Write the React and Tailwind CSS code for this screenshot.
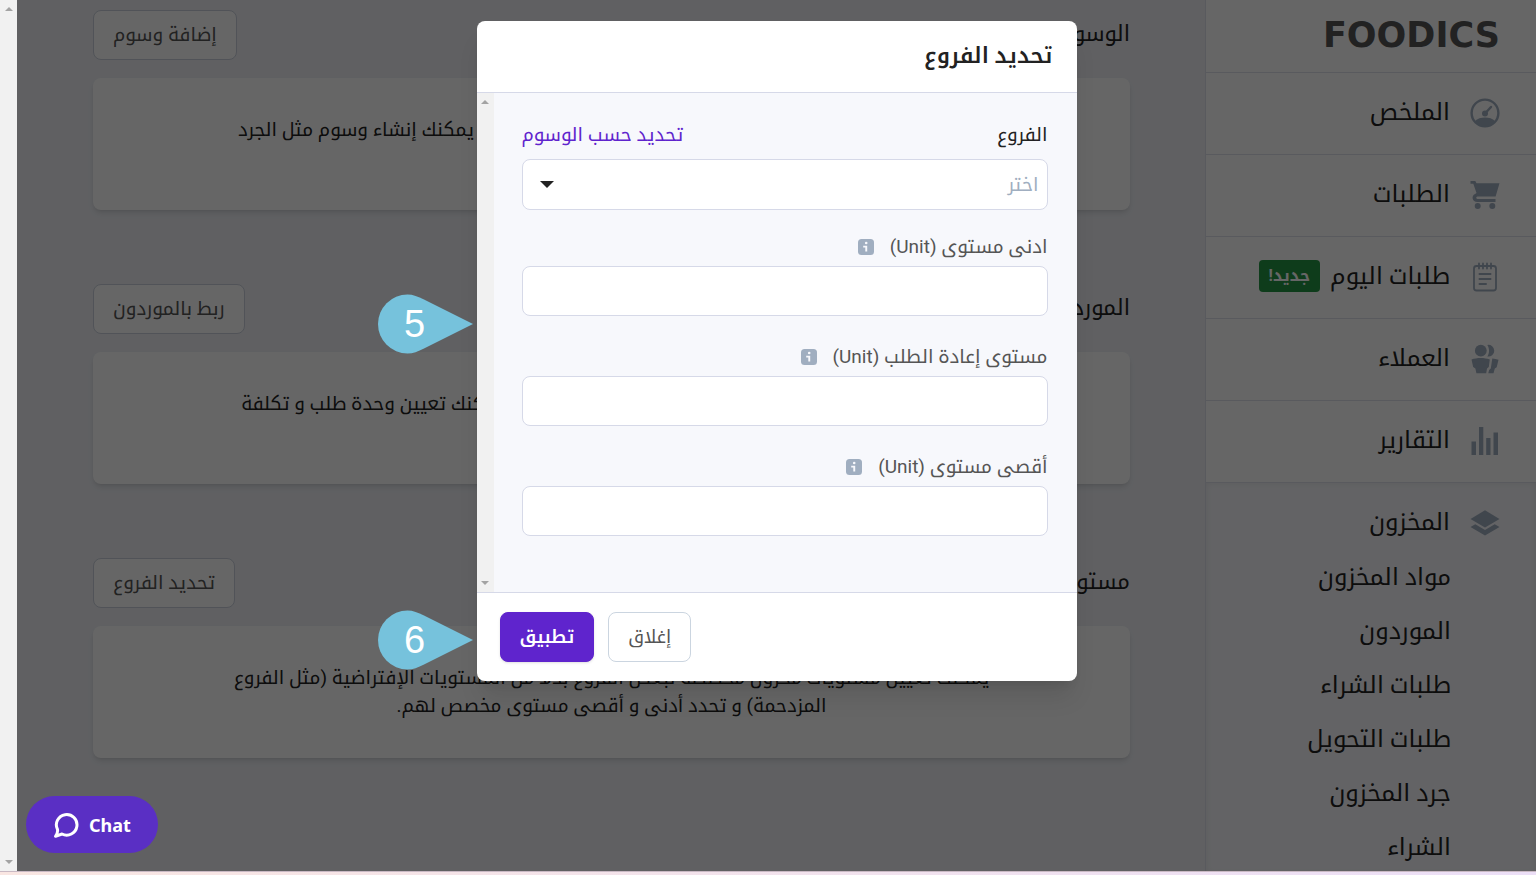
import React from "react";

const topLinks = [
  { label: "الملخص", icon: GaugeIcon },
  { label: "الطلبات", icon: CartIcon },
  { label: "طلبات اليوم", icon: NotepadIcon, badge: "جديد!" },
  { label: "العملاء", icon: PeopleIcon },
  { label: "التقارير", icon: BarsIcon },
];

const inventoryLinks = [
  "مواد المخزون",
  "الموردون",
  "طلبات الشراء",
  "طلبات التحويل",
  "جرد المخزون",
  "الشراء",
];

const sections = [
  {
    title: "الوسوم",
    action: "إضافة وسوم",
    lines: [
      "استخدم الوسوم لتصنيف وتنظيم مواد المخزون المتوفرة لديكم. يمكنك إنشاء وسوم مثل الجرد",
      "اليومي أو المواد الجافة.",
    ],
  },
  {
    title: "الموردون",
    action: "ربط بالموردون",
    lines: [
      "قم بربط هذه المادة بالموردين الذين تتعامل معهم باستمرار يمكنك تعيين وحدة طلب و تكلفة",
      "مختلفة لكل مورد.",
    ],
  },
  {
    title: "مستويات المخزون",
    action: "تحديد الفروع",
    lines: [
      "يمكنك تعيين مستويات مخزون مخصصة لبعض الفروع بدلاً من المستويات الإفتراضية (مثل الفروع",
      "المزدحمة) و تحدد أدنى و أقصى مستوى مخصص لهم.",
    ],
  },
];

const levelFields = [
  { id: "min-level", label: "ادنى مستوى (Unit)" },
  { id: "reorder-level", label: "مستوى إعادة الطلب (Unit)" },
  { id: "max-level", label: "أقصى مستوى (Unit)" },
];

function GaugeIcon() {
  return (
    <svg viewBox="0 0 30 30" className="size-[30px]" aria-hidden="true">
      <circle cx="15" cy="15" r="13.4" fill="none" stroke="currentColor" strokeWidth="2.4" />
      <path d="M5 23c2.500-2.500 6-3.500 10-3.500s7.500 1 10 3.500c-2.500 4-6 6-10 6s-7.500-2-10-6Z" fill="currentColor" />
      <circle cx="15" cy="15.500" r="3" fill="currentColor" />
      <path d="m15 15.500 6-6.500" stroke="currentColor" strokeWidth="2.400" strokeLinecap="round" />
    </svg>
  );
}

function CartIcon() {
  return (
    <svg viewBox="0 0 30 30" className="size-[30px]" fill="currentColor" aria-hidden="true">
      <path d="M.5 1h4.800l1.200 2.200H29.500L25.600 16.500H7.400c-1.600 0-1.600 2.500 0 2.500H25.500v3H7.400c-5.400 0-6.400-6.400-2.300-8L6.500 13 3.300 3.800H.5Z" />
      <circle cx="7.700" cy="26" r="3" />
      <circle cx="22.300" cy="26" r="3" />
    </svg>
  );
}

function NotepadIcon() {
  return (
    <svg viewBox="0 0 30 30" className="size-[30px]" fill="none" stroke="currentColor" strokeLinecap="round" aria-hidden="true">
      <rect x="4" y="4" width="22" height="24.500" rx="2.500" strokeWidth="1.800" />
      <path d="M9 1.500v5M13 1.500v5M17 1.500v5M21 1.500v5" strokeWidth="1.800" />
      <path d="M9.500 12h11M9.500 17h11M9.500 22h6.500" strokeWidth="2" />
    </svg>
  );
}

function PeopleIcon() {
  return (
    <svg viewBox="0 0 30 30" className="size-[30px]" fill="currentColor" aria-hidden="true">
      <circle cx="10.800" cy="6.700" r="5.900" />
      <path d="M17.300.9a5.900 5.900 0 1 1 0 11.600c2.300-3.400 2.300-8.200 0-11.600Z" />
      <path d="M1.500 15.500c5.500-2 12.800-2 18.300 0l-1 7.500-1.800 1.500-.8 4.700H6.400l-1-4.700L3.200 23Z" />
      <path d="M22.300 14.500c2.200.2 4.300.5 6.200 1.200l-1.800 7.500-1.900 1.300-1.300 4.700h-5.200l.8-3.200 1.700-1.500Z" />
    </svg>
  );
}

function BarsIcon() {
  return (
    <svg viewBox="0 0 30 30" className="size-[30px]" fill="currentColor" aria-hidden="true">
      <path d="M1.500 15.500h4.500V29H1.500ZM9 1h4.300v28H9ZM16.200 12h4.300v17h-4.300ZM23.500 6.500h4.500V29h-4.500Z" />
    </svg>
  );
}

function LayersIcon() {
  return (
    <svg viewBox="0 0 30 30" className="size-[30px]" fill="currentColor" aria-hidden="true">
      <path d="M15 2.200 29.500 11 15 19.500.5 11Z" />
      <path d="m.5 19 4.800-2.800L15 22l9.700-5.800 4.800 2.800L15 27.500Z" />
    </svg>
  );
}

function InfoIcon() {
  return (
    <svg viewBox="0 0 16 16" className="size-4" aria-hidden="true">
      <rect width="16" height="16" rx="3.500" fill="#a0aec0" />
      <circle cx="8.200" cy="4" r="1.300" fill="#f7f8fc" />
      <path d="M5.200 6.800h4v5.700H7.300V8.500H5.200Z" fill="#f7f8fc" />
    </svg>
  );
}

function ScrollTrack() {
  return (
    <div className="flex w-[17px] shrink-0 flex-col items-center justify-between bg-[#f1f1f1] py-[7px]" aria-hidden="true">
      <svg viewBox="0 0 8 4" className="h-1 w-2"><path d="M4 0 8 4H0Z" fill="#a3a3a3" /></svg>
      <svg viewBox="0 0 8 4" className="h-1 w-2"><path d="M4 4 8 0H0Z" fill="#a3a3a3" /></svg>
    </div>
  );
}

function Sidebar() {
  return (
    <aside className="flex w-[331px] shrink-0 flex-col border-l border-[#dfe2ea] bg-white">
      <div className="flex h-[73px] shrink-0 items-center border-b border-[#dfe2ea] px-9 pb-0.5">
        <a href="#home" dir="ltr" className="font-['DejaVu_Sans'] text-[35px] leading-none font-bold text-[#555]">
          FOODICS
        </a>
      </div>
      <nav className="flex flex-col text-2xl text-[#222]">
        {topLinks.map(({ label, icon: Icon, badge }) => (
          <a key={label} href="#section" className="flex h-[82px] items-center gap-5 border-b border-[#dfe2ea] px-9 pb-0.5">
            <span className="text-[#a0aec0]"><Icon /></span>
            <span className="flex items-center gap-2.5 pb-0.5">
              {label}
              {badge && (
                <span className="flex h-8 items-center rounded bg-[#259645] px-2.5 text-base font-bold text-white">{badge}</span>
              )}
            </span>
          </a>
        ))}
        <div className="flex flex-col bg-[#f7f8fc] shadow-[inset_0_0_6px_rgba(0,0,0,0.08)]">
          <a href="#inventory" className="flex h-[82px] items-center gap-5 px-9 pb-0.5">
            <span className="text-[#a0aec0]"><LayersIcon /></span>
            <span className="pb-0.5">المخزون</span>
          </a>
          <ul className="-mt-[15px] flex flex-col pr-[85px]">
            {inventoryLinks.map((label) => (
              <li key={label}>
                <a href="#inventory" className="flex h-[54px] items-center">{label}</a>
              </li>
            ))}
          </ul>
        </div>
      </nav>
    </aside>
  );
}

function Section({ title, action, lines }) {
  return (
    <section className="flex flex-col gap-[18px]">
      <div className="flex h-[50px] items-center justify-between">
        <h2 className="pb-1 text-[22px] text-[#222]">{title}</h2>
        <button type="button" className="h-[50px] rounded-lg border border-[#cbd0dc] bg-white px-[19px] text-[19px] text-[#555]">
          {action}
        </button>
      </div>
      <div className="rounded-lg bg-white p-[38px] text-center text-[19px] leading-7 text-[#222] shadow-md">
        {lines.map((line) => (
          <p key={line} className="whitespace-nowrap">{line}</p>
        ))}
      </div>
    </section>
  );
}

function Marker({ number, className }) {
  return (
    <div dir="ltr" className={`absolute -left-[99px] h-[60px] w-[96px] ${className}`}>
      <svg viewBox="0 0 96 60" className="absolute inset-0 size-full" aria-hidden="true">
        <path d="M95 30 46 5.500C40 2.500 35 .5 29.500.5a29.500 29.500 0 0 0 0 59C35 59.500 40 57.500 46 54.500Z" fill="#76c2dc" />
      </svg>
      <span className="relative flex h-full w-[74px] items-center justify-center font-['Liberation_Sans'] text-[38px] text-white">
        {number}
      </span>
    </div>
  );
}

function BranchDialog() {
  return (
    <div role="dialog" aria-modal="true" aria-labelledby="dialog-title" className="relative w-[600px] rounded-lg bg-white shadow-xl">
      <header className="flex h-[72px] items-center border-b border-[#d6d9e8] px-6 pb-0.5">
        <h1 id="dialog-title" className="text-[22px] font-semibold text-[#222]">تحديد الفروع</h1>
      </header>
      <div className="flex flex-row-reverse">
        <ScrollTrack />
        <div className="flex flex-1 flex-col gap-[27px] bg-[#f7f8fc] pt-7 pr-[29px] pb-14 pl-7 text-[19px] leading-7">
          <div className="-mb-1 flex flex-col gap-2.5">
            <div className="flex justify-between">
              <label htmlFor="branches" className="text-[#222]">الفروع</label>
              <a href="#tags" className="text-[#5f24cd]">تحديد حسب الوسوم</a>
            </div>
            <div className="relative">
              <select
                id="branches"
                defaultValue=""
                className="block h-[51px] w-full appearance-none rounded-lg border border-[#d6d9e8] bg-white px-2 text-[#a0aec0]"
              >
                <option value="">اختر</option>
              </select>
              <svg viewBox="0 0 14 7" className="pointer-events-none absolute top-[22px] left-[18px] h-[7px] w-[14px]" aria-hidden="true">
                <path d="M0 0h14L7 7Z" fill="#222" />
              </svg>
            </div>
          </div>
          {levelFields.map(({ id, label }) => (
            <div key={id} className="flex flex-col gap-[5px]">
              <div className="flex items-center gap-4">
                <label htmlFor={id} className="text-[#555]">{label}</label>
                <InfoIcon />
              </div>
              <input id={id} type="text" className="h-[50px] w-full rounded-lg border border-[#d6d9e8] bg-white px-2.5" />
            </div>
          ))}
        </div>
      </div>
      <footer dir="ltr" className="flex gap-3.5 border-t border-[#d6d9e8] px-[23px] py-[19px] text-lg">
        <button type="button" className="h-[50px] rounded-lg border border-[#5f24cd] bg-[#5f24cd] px-[19px] font-semibold text-white shadow-sm">تطبيق</button>
        <button type="button" className="h-[50px] rounded-lg border border-[#cbd5e0] bg-white px-[19px] text-[#555]">إغلاق</button>
      </footer>
      <Marker number="5" className="top-[273px]" />
      <Marker number="6" className="top-[589px]" />
    </div>
  );
}

export default function App() {
  return (
    <div dir="rtl" className="flex h-screen flex-col overflow-hidden font-['Roboto','Noto_Kufi_Arabic',sans-serif]">
      <div className="flex min-h-0 flex-1 flex-row-reverse">
        <ScrollTrack />
        <div className="relative flex min-w-0 flex-1 overflow-hidden bg-[#eff1f6]">
          <Sidebar />
          <main className="flex min-w-0 flex-1 flex-col gap-[74px] pt-2.5 pr-[75px] pl-[76px]">
            {sections.map((section) => (
              <Section key={section.title} {...section} />
            ))}
          </main>
          <div className="absolute inset-0 flex items-start justify-center bg-black/60 pt-[21px]">
            <BranchDialog />
          </div>
          <button
            type="button"
            dir="ltr"
            className="absolute bottom-[18px] left-[9px] flex h-[57px] items-center gap-2.5 rounded-full bg-[#5a2fc4] px-[27px] font-['Noto_Sans'] text-lg font-bold text-white"
          >
            <svg viewBox="0 0 26 26" className="size-[26px]" fill="none" stroke="currentColor" strokeWidth="3" strokeLinejoin="round" strokeLinecap="round" aria-hidden="true">
              <path d="M4.500 17.500A10.300 10.300 0 1 1 9 22L2.500 24.300Q5 21 4.500 17.500Z" />
            </svg>
            Chat
          </button>
        </div>
      </div>
      <div className="h-1 shrink-0 border-t border-[#c9b9c4] bg-linear-to-r from-[#f9e6e2] to-[#ecdff7]" />
    </div>
  );
}
